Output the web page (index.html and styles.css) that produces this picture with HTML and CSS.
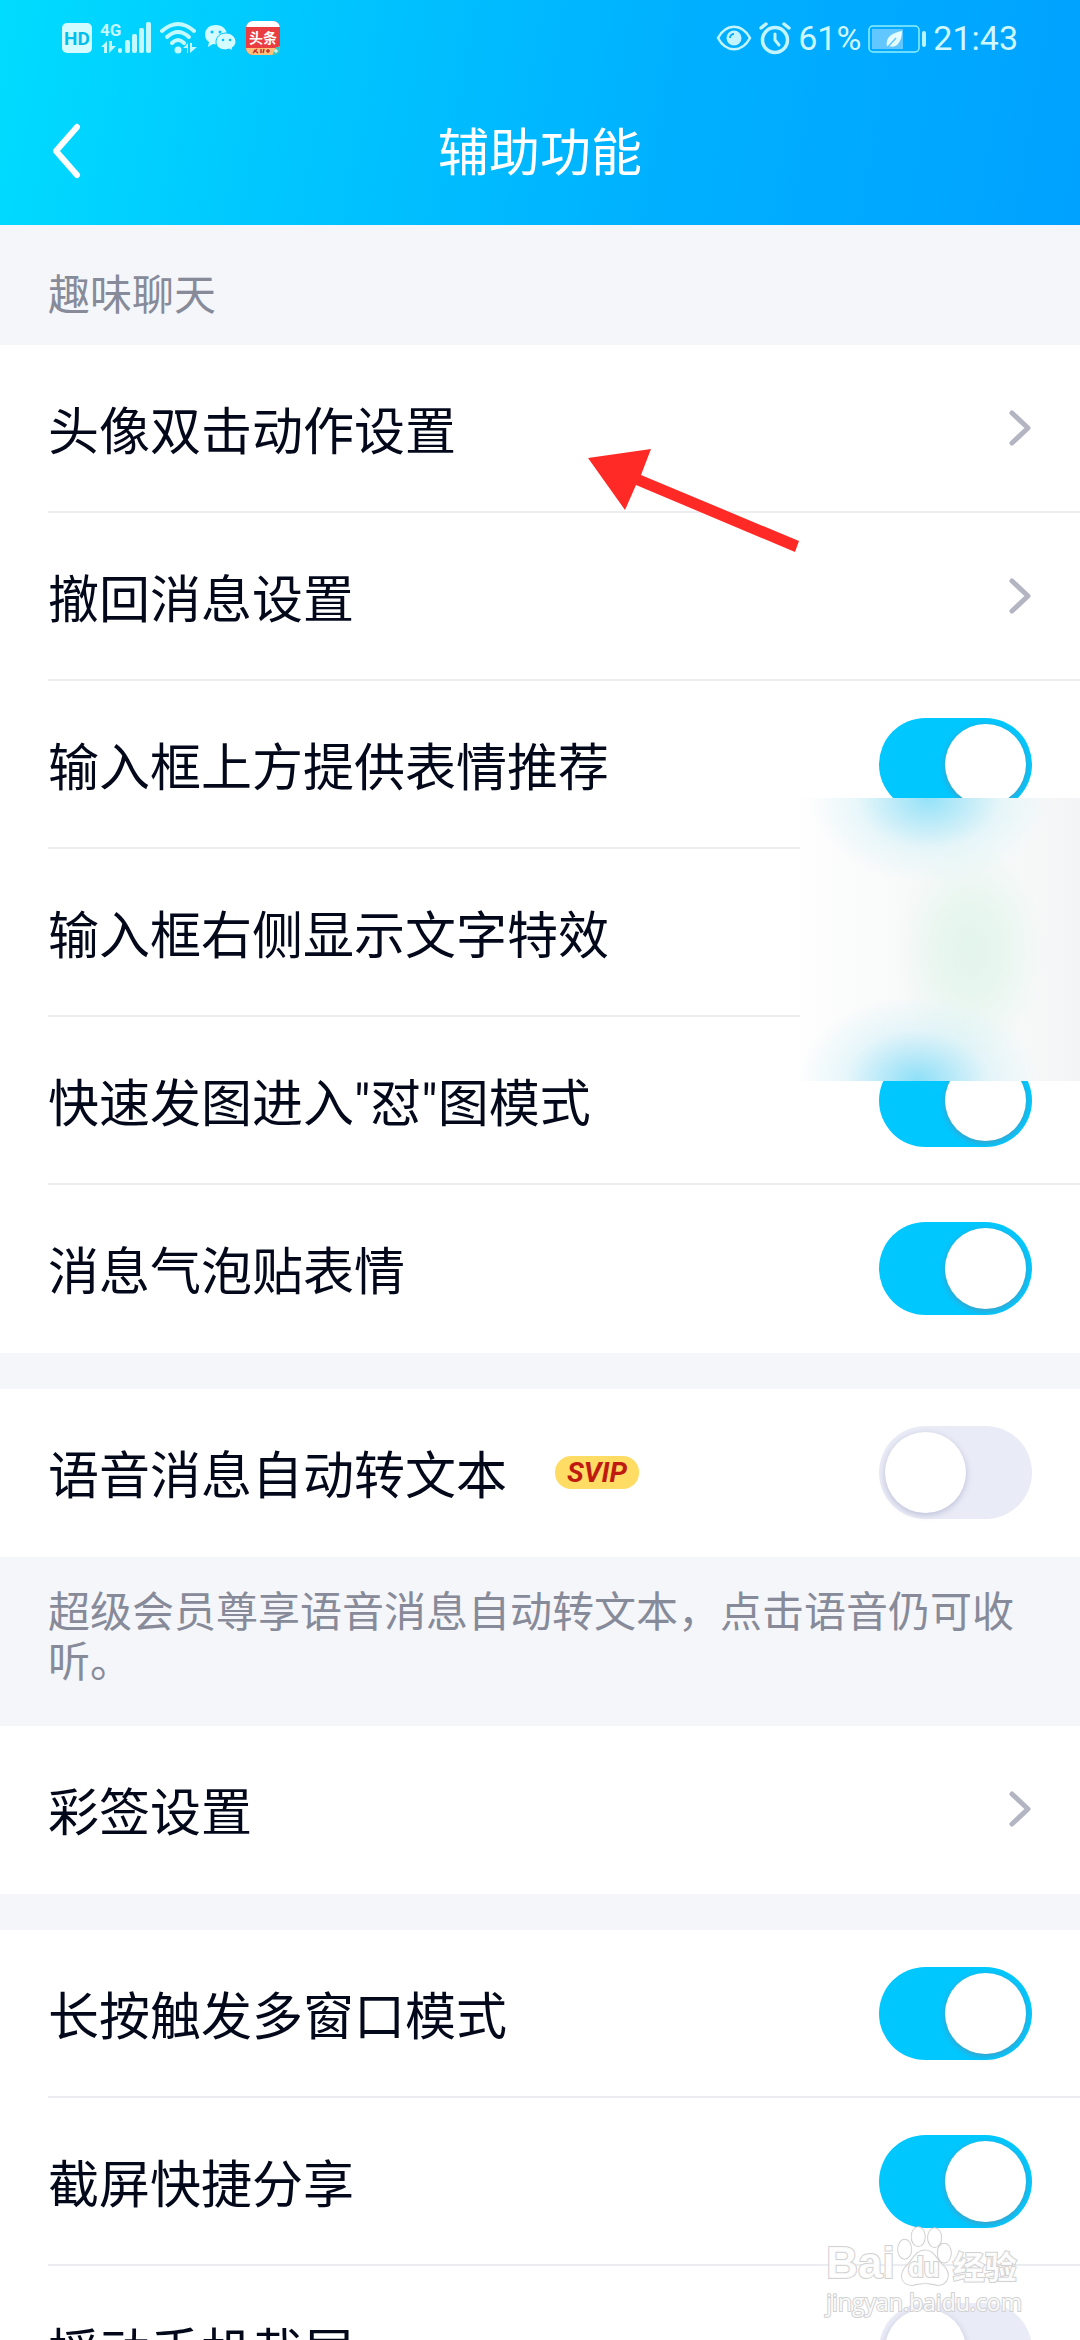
FILE: index.html
```html
<!DOCTYPE html>
<html lang="zh-CN">
<head>
    <meta charset="UTF-8">
    <meta name="viewport" content="width=device-width, initial-scale=1.0">
    <title>辅助功能</title>
    <link rel="stylesheet" href="styles.css">
</head>
<body>

    <div class="app">
        <header class="header">
            <div class="status-bar">
                <div class="status-left">
                    <!-- HD -->
                    <svg width="32" height="36" viewBox="0 0 32 36">
                        <rect x="1" y="3" width="30" height="30" rx="5" fill="#d4fbff"/>
                        <text x="16" y="25" class="icon-hd" text-anchor="middle">HD</text>
                    </svg>
                    <!-- 4G signal -->
                    <svg width="52" height="36" viewBox="0 0 52 36" fill="#c4faff">
                        <text x="0" y="16" class="icon-4g">4G</text>
                        <path d="M1 27 L7 21 V33 H4 V27Z M9 21 H12 V26 H16 L9 33Z"/>
                        <rect x="18" y="28" width="4" height="5" rx="2"/>
                        <rect x="25" y="20" width="5" height="13" rx="2"/>
                        <rect x="32" y="14" width="5" height="19" rx="2"/>
                        <rect x="39" y="8" width="5" height="25" rx="2"/>
                        <rect x="46" y="2" width="5" height="31" rx="2"/>
                    </svg>
                    <!-- wifi -->
                    <svg width="38" height="36" viewBox="0 0 38 36">
                        <g fill="none" stroke="#c4faff" stroke-width="4" stroke-linecap="round">
                            <path d="M3 11 Q19 -3 35 11"/>
                            <path d="M8 17 Q19 7 30 17"/>
                            <path d="M13 23 Q19 17 25 23"/>
                        </g>
                        <circle cx="19" cy="30" r="3.5" fill="#c4faff"/>
                        <path d="M24 28 L29 23 V33 H28 V28Z M31 23 H33 V27 H38 L31 33Z" fill="#c4faff"/>
                    </svg>
                    <!-- wechat -->
                    <svg width="34" height="36" viewBox="0 0 34 36">
                        <path d="M12 5 C5 5 1 9 1 15 C1 18 3 21 5 22 L4 27 L9 24 C19 26 23 21 23 15 C23 9 18 5 12 5Z" fill="#d4fbff"/>
                        <path d="M22 13 C16 13 12 17 12 22 C12 27 16 30 22 30 L25 29 L29 31 L28 28 C30 27 32 24 32 22 C32 17 28 13 22 13Z" fill="#d4fbff" stroke="#00c4ff" stroke-width="1"/>
                        <g fill="#00c4ff">
                            <circle cx="8" cy="12" r="1.5"/><circle cx="16" cy="12" r="1.5"/>
                            <circle cx="19" cy="20" r="1.3"/><circle cx="26" cy="20" r="1.3"/>
                        </g>
                    </svg>
                    <!-- toutiao -->
                    <svg width="36" height="36" viewBox="0 0 36 36">
                        <clipPath id="tt"><rect x="1" y="1" width="34" height="34" rx="7"/></clipPath>
                        <g clip-path="url(#tt)">
                            <rect width="36" height="36" fill="#e93d42"/>
                            <rect width="36" height="7" fill="#fff"/>
                            <path d="M0 28 H30 L36 26 V36 H0Z" fill="#ffc07a"/>
                            <path d="M27 36 L31 27 H36 V36Z" fill="#35c9c0"/>
                            <path d="M8 33 L12 29 M9 30 L13 33 M16 29 V33 M19 29 L18 33 M23 29 V33 M21 31 H25" stroke="#c8322c" stroke-width="1.5"/>
                            <path d="M31 29 V33 M29 31 H33" stroke="#fff"/>
                        </g>
                        <text x="18" y="23" class="icon-tt" text-anchor="middle">头条</text>
                    </svg>
                </div>
                <div class="status-right">
                    <!-- eye -->
                    <svg width="36" height="36" viewBox="0 0 36 36">
                        <path d="M2 18 C10 3 26 3 34 18 C26 33 10 33 2 18Z" fill="none" stroke="#c4f5ff" stroke-width="2.5"/>
                        <circle cx="18" cy="18" r="7.5" fill="#c4f5ff"/>
                        <path d="M14 18 A4 4 0 0 1 18 14" fill="none" stroke="#08adff" stroke-width="2"/>
                    </svg>
                    <!-- alarm -->
                    <svg width="34" height="36" viewBox="0 0 34 36" fill="none" stroke="#c4f5ff" stroke-width="3.5" stroke-linecap="round">
                        <circle cx="17" cy="20" r="12.5"/>
                        <path d="M3 8 L8 4 M26 4 L31 8"/>
                        <path d="M17 14 V20 L21 25" stroke-width="3"/>
                    </svg>
                    <span class="battery-text">61%</span>
                    <!-- battery -->
                    <svg width="60" height="36" viewBox="0 0 60 36">
                        <rect x="2" y="6" width="50" height="26" rx="4" fill="none" stroke="#8ff0ff" stroke-width="1.5"/>
                        <rect x="5" y="9" width="31" height="20" fill="#62c6ff"/>
                        <path d="M20 27 C18 17 25 13 35 11 C35 21 30 29 22 26Z" fill="#e6fdff"/>
                        <path d="M19 29 L29 18" stroke="#62c6ff" stroke-width="1.5"/>
                        <rect x="55" y="11" width="4" height="16" rx="2" fill="#b8f5ff"/>
                    </svg>
                    <span class="time">21:43</span>
                </div>
            </div>
            <div class="nav-bar">
                <button class="back" aria-label="返回">
                    <svg width="32" height="58" viewBox="0 0 32 58" fill="none" stroke="#fff" stroke-width="6" stroke-linecap="round" stroke-linejoin="round">
                        <path d="M27 5 L6 29 L27 53"/>
                    </svg>
                </button>
                <h1>辅助功能</h1>
            </div>
        </header>

        <main class="content">
            <h2 class="group-title">趣味聊天</h2>
            <div class="group">
                <a class="row" href="#">
                    <span class="row-text">头像双击动作设置</span>
                    <svg class="chevron" width="24" height="36" viewBox="0 0 24 36"><path d="M4 3 L20 18 L4 33"/></svg>
                </a>
                <a class="row" href="#">
                    <span class="row-text">撤回消息设置</span>
                    <svg class="chevron" width="24" height="36" viewBox="0 0 24 36"><path d="M4 3 L20 18 L4 33"/></svg>
                </a>
                <label class="row">
                    <span class="row-text">输入框上方提供表情推荐</span>
                    <input type="checkbox" class="switch" checked>
                </label>
                <label class="row">
                    <span class="row-text">输入框右侧显示文字特效</span>
                    <input type="checkbox" class="switch" checked>
                </label>
                <label class="row">
                    <span class="row-text">快速发图进入"怼"图模式</span>
                    <input type="checkbox" class="switch" checked>
                </label>
                <label class="row last">
                    <span class="row-text">消息气泡贴表情</span>
                    <input type="checkbox" class="switch" checked>
                </label>

                <svg class="arrow" width="214" height="106" viewBox="0 0 214 106">
                    <path d="M2 10 L65 1 L55 27 L213 93 L209 104 L50 37 L39 62Z" fill="#ff2a26"/>
                </svg>
                <div class="mosaic"></div>
            </div>

            <div class="group spaced">
                <label class="row last">
                    <span class="row-text">语音消息自动转文本</span>
                    <span class="svip">SVIP</span>
                    <input type="checkbox" class="switch">
                </label>
            </div>
            <p class="group-note">超级会员尊享语音消息自动转文本，点击语音仍可收听。</p>

            <div class="group">
                <a class="row last" href="#">
                    <span class="row-text">彩签设置</span>
                    <svg class="chevron" width="24" height="36" viewBox="0 0 24 36"><path d="M4 3 L20 18 L4 33"/></svg>
                </a>
            </div>

            <div class="group spaced">
                <label class="row">
                    <span class="row-text">长按触发多窗口模式</span>
                    <input type="checkbox" class="switch" checked>
                </label>
                <label class="row">
                    <span class="row-text">截屏快捷分享</span>
                    <input type="checkbox" class="switch" checked>
                </label>
                <label class="row last">
                    <span class="row-text">摇动手机截屏</span>
                    <input type="checkbox" class="switch">
                </label>
            </div>
        </main>

        <!-- watermark -->
        <div class="watermark">
            <div class="wm-logo">
                <span class="wm-bai">Bai</span>
                <span class="wm-paw">
                    <svg width="58" height="64" viewBox="0 0 60 64" fill="rgba(255,255,255,.8)" stroke="#c9c9c9" stroke-width="1.5">
                        <ellipse cx="10" cy="25" rx="7" ry="10"/>
                        <ellipse cx="24" cy="12" rx="7" ry="10"/>
                        <ellipse cx="41" cy="13" rx="7" ry="10"/>
                        <ellipse cx="51" cy="29" rx="7" ry="10"/>
                        <path d="M31 26 C40 26 42 34 49 41 C60 51 54 63 43 62 C36 60 26 60 19 62 C8 63 3 53 11 43 C19 36 21 26 31 26Z"/>
                    </svg>
                    <span class="wm-du">du</span>
                </span>
                <span class="wm-cn">经验</span>
            </div>
            <div class="wm-url">jingyan.baidu.com</div>
        </div>
    </div>

</body>
</html>
```

FILE: styles.css
```css
* {
    box-sizing: border-box;
}
body {
    margin: 0;
    font-family: Roboto, "Noto Sans CJK SC", sans-serif;
    color: #03081a;
    background-color: #f5f6fa;
}
.app {
    position: relative;
    display: flex;
    flex-direction: column;
    height: 100vh;
    overflow: hidden;
}

/* header */
.header {
    flex: none;
    background: linear-gradient(100deg, #00dcff 0%, #00c6ff 28%, #00b0ff 62%, #00a2ff 100%);
    color: #fff;
}
.status-bar {
    display: flex;
    justify-content: space-between;
    align-items: center;
    height: 76px;
    padding: 0 62px 0 61px;
}
.status-left {
    display: flex;
    align-items: center;
    gap: 7px;
}
.status-right {
    display: flex;
    align-items: center;
    gap: 6px;
    font-size: 34px;
    line-height: 36px;
    color: #d0f8ff;
}
.icon-hd {
    font: 700 19px Roboto, sans-serif;
    fill: #00bfec;
}
.icon-4g {
    font: 700 17px Roboto, sans-serif;
}
.icon-tt {
    font: 700 14px "Noto Sans CJK SC", sans-serif;
    fill: #fff;
}
.nav-bar {
    display: grid;
    grid-template-columns: 96px 1fr 96px;
    align-items: center;
    height: 149px;
}
.back {
    display: flex;
    justify-content: flex-end;
    padding: 0 14px 0 0;
    border: none;
    background: none;
}
h1 {
    margin: 0;
    padding-top: 6px;
    font-size: 51px;
    line-height: 76px;
    font-weight: 400;
    text-align: center;
}

/* list */
.content {
    flex: 1;
    min-height: 0;
    overflow: hidden;
}
.group-title {
    margin: 0;
    padding: 41px 48px 19px;
    font-size: 42px;
    line-height: 60px;
    font-weight: 400;
    color: #878b99;
}
.group {
    position: relative;
    background-color: #fff;
}
.spaced {
    margin-top: 36px;
}
.row {
    display: flex;
    align-items: center;
    height: 168px;
    margin-left: 48px;
    padding-right: 48px;
    border-bottom: 2px solid #ebedf1;
    color: inherit;
    text-decoration: none;
}
.row.last {
    border-bottom-color: transparent;
}
.row-text {
    padding-top: 10px;
    font-size: 51px;
    line-height: 76px;
}
.chevron {
    margin-left: auto;
    fill: none;
    stroke: #b3b5c2;
    stroke-width: 5;
    stroke-linecap: round;
    stroke-linejoin: round;
}
.group-note {
    margin: 0;
    padding: 31px 48px 38px;
    font-size: 42px;
    line-height: 50px;
    color: #878b99;
}
.svip {
    margin-left: 48px;
    padding: 0 12px;
    border-radius: 16px;
    background-color: #ffdc64;
    color: #bf1a10;
    font-size: 28px;
    line-height: 33px;
    font-weight: 700;
    font-style: italic;
}

/* switch */
.switch {
    appearance: none;
    flex: none;
    width: 153px;
    height: 93px;
    margin: 0 0 0 auto;
    padding: 6px;
    border-radius: 47px;
    background-color: #e9ebf6;
}
.switch::before {
    content: "";
    display: block;
    width: 81px;
    height: 81px;
    border-radius: 50%;
    background-color: #fff;
    box-shadow: 0 2px 6px rgba(120, 125, 170, 0.4);
}
.switch:checked {
    background-color: #00c8ff;
}
.switch:checked::before {
    margin-left: auto;
    box-shadow: 0 2px 6px rgba(120, 125, 150, 0.6);
}

/* things lying over the list */
.arrow {
    position: absolute;
    top: 103px;
    left: 586px;
}
.mosaic {
    position: absolute;
    top: 453px;
    right: 0;
    width: 280px;
    height: 283px;
    background:
        radial-gradient(ellipse 120px 85px at 46% 0, #94e2f8 0%, rgba(170, 230, 248, 0.75) 30%, rgba(205, 240, 248, 0.4) 60%, rgba(230, 245, 248, 0) 100%),
        radial-gradient(ellipse 120px 85px at 42% 100%, #8cdff8 0%, rgba(165, 228, 248, 0.75) 30%, rgba(200, 238, 248, 0.4) 60%, rgba(230, 245, 248, 0) 100%),
        radial-gradient(ellipse 75px 110px at 61% 54%, #e3f5ec 0%, rgba(228, 245, 237, 0.8) 40%, rgba(243, 248, 246, 0) 100%),
        linear-gradient(90deg, #fefefe 0%, #f8f9f9 40%, #f7f9f9 80%, #f3f4f5 100%);
}

/* watermark */
.watermark {
    position: absolute;
    right: 58px;
    bottom: 24px;
    color: rgba(255, 255, 255, 0.9);
    -webkit-text-stroke: 2px #d2d2d2;
    paint-order: stroke fill;
}
.wm-logo {
    display: flex;
    align-items: flex-end;
    height: 64px;
    font-weight: 700;
}
.wm-bai {
    font-family: "Liberation Sans", sans-serif;
    font-size: 44px;
    line-height: 50px;
}
.wm-paw {
    position: relative;
    display: flex;
}
.wm-du {
    position: absolute;
    left: 0;
    right: 0;
    bottom: 4px;
    font-size: 28px;
    line-height: 32px;
    text-align: center;
}
.wm-cn {
    font-size: 32px;
    line-height: 40px;
}
.wm-url {
    font-family: "Open Sans", sans-serif;
    font-size: 23px;
    line-height: 28px;
    text-align: right;
}
```
